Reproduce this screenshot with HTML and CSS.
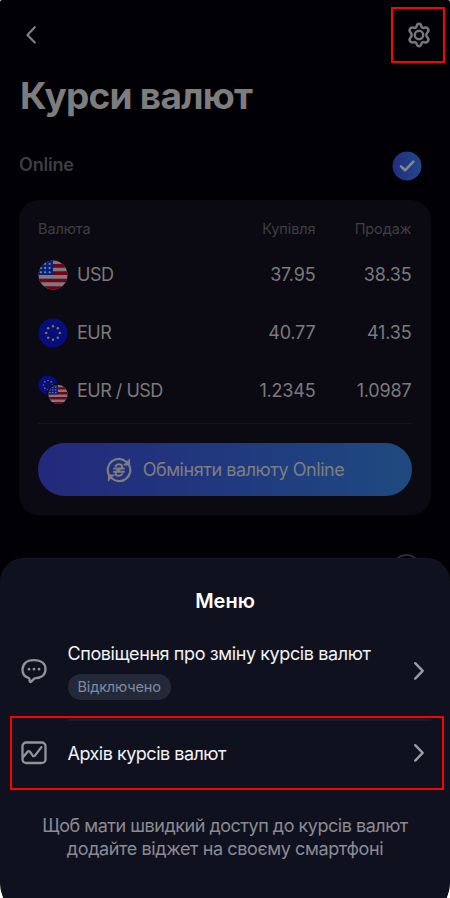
FILE: index.html
```html
<!DOCTYPE html>
<html lang="uk">
<head>
<meta charset="utf-8">
<title>Курси валют</title>
<link rel="stylesheet" href="styles.css">
</head>
<body>
<svg class="defs" width="0" height="0" aria-hidden="true">
  <defs>
    <clipPath id="round"><circle cx="15" cy="15" r="14.5"/></clipPath>
    <symbol id="flag-us" viewBox="0 0 30 30">
      <g clip-path="url(#round)">
        <rect width="30" height="30" fill="#7c7a7d"/>
        <path d="M0 5.8h30M0 13.2h30M0 20.5h30M0 28h30" stroke="#750018" stroke-width="3.7"/>
        <rect width="15" height="15" fill="#0a1f7c"/>
        <path d="M7 3.9h.3M11.5 3.9h.3M7 8h.3M11.5 8h.3M2.7 8h.3M7 12.2h.3M11.5 12.2h.3M2.7 12.2h.3" stroke="#858890" stroke-width="1.9"/>
      </g>
    </symbol>
    <symbol id="flag-eu" viewBox="0 0 30 30">
      <circle cx="15" cy="15" r="14.5" fill="#050e7c"/>
      <g fill="#82754a">
        <circle cx="15" cy="8.2" r="1.25"/><circle cx="19.8" cy="10.2" r="1.25"/>
        <circle cx="21.8" cy="15" r="1.25"/><circle cx="19.8" cy="19.8" r="1.25"/>
        <circle cx="15" cy="21.8" r="1.25"/><circle cx="10.2" cy="19.8" r="1.25"/>
        <circle cx="8.2" cy="15" r="1.25"/><circle cx="10.2" cy="10.2" r="1.25"/>
      </g>
    </symbol>
  </defs>
</svg>
<div class="phone">
  <header class="bar">
    <svg class="back" viewBox="0 0 12 20"><path d="M9.8 2.2 2.4 9.9l7.4 7.6"/></svg>
    <div class="highlight settings">
      <svg class="gear" viewBox="0 0 26 26">
        <path d="M10.6 4.2C11 2.4 11.7 1.7 13 1.7s2 .7 2.4 2.5c.3 1.4 1.3 2 2.7 1.6 1.8-.6 3-.4 3.9 1.1s.6 2.4-.7 3.7c-1.3 1.3-1.3 3.4 0 4.7s1.6 2.2.7 3.7-2.1 1.8-3.9 1.2c-1.4-.4-2.4.2-2.7 1.6-.4 1.8-1.1 2.5-2.4 2.5s-2-.7-2.4-2.5c-.3-1.4-1.3-2-2.7-1.6-1.8.6-3 .3-3.9-1.2s-.6-2.4.7-3.7 1.3-3.4 0-4.7S3.1 8.4 4 6.9s2.1-1.7 3.9-1.1c1.4.4 2.4-.2 2.7-1.6z"/>
        <circle cx="13" cy="13" r="4.2"/>
      </svg>
    </div>
  </header>
  <h1 class="title">Курси валют</h1>
  <div class="section">
    <span class="section-name">Online</span>
    <svg class="check" viewBox="0 0 30 30">
      <defs><linearGradient id="cg"><stop offset="0" stop-color="#232d80"/><stop offset="1" stop-color="#22478a"/></linearGradient></defs>
      <circle cx="15" cy="15" r="14.5" fill="url(#cg)" stroke="none"/>
      <path d="m9 15.400 4 3.900 8.300-8.600"/>
    </svg>
  </div>
  <section class="card">
    <div class="row head"><span class="h-name">Валюта</span><span>Купівля</span><span>Продаж</span></div>
    <div class="row">
      <span class="cur"><svg class="flag"><use href="#flag-us"/></svg><b class="code">USD</b></span><span>37.95</span><span>38.35</span>
    </div>
    <div class="row">
      <span class="cur"><svg class="flag"><use href="#flag-eu"/></svg><b class="code">EUR</b></span><span>40.77</span><span>41.35</span>
    </div>
    <div class="row">
      <span class="cur"><svg class="flag" viewBox="0 0 30 30"><use href="#flag-eu" width="20" height="20"/><circle cx="20" cy="19.5" r="11" fill="#0b0a12"/><use href="#flag-us" x="10" y="9.5" width="20" height="20"/></svg><b class="code">EUR / USD</b></span><span>1.2345</span><span>1.0987</span>
    </div>
    <hr class="rule">
    <button class="exchange">
      <svg class="swap" viewBox="0 0 26 26">
        <path d="M3 18A11 11 0 0 1 20.200 4.800M23 8A11 11 0 0 1 5.800 21.200"/>
        <path d="M23.600 2.400v5.600h-5.600zM2.400 23.600v-5.600h5.600z" fill="#7e7e80" stroke-width="1"/>
        <path class="sign" d="M9.600 9.100c.8-1.200 1.900-1.800 3.300-1.800 1.900 0 3.200.9 3.200 2.500 0 3.300-6.600 3-6.600 6.400 0 1.600 1.300 2.600 3.200 2.600 1.500 0 2.700-.6 3.600-1.800M8 11.500h10M8 14.700h10"/>
      </svg>
      <span>Обміняти валюту Online</span>
    </button>
  </section>
  <div class="next"><i class="radio"></i></div>
  <section class="sheet">
    <h2 class="sheet-title">Меню</h2>
    <div class="item notify">
      <svg class="icon" viewBox="0 0 26 26">
        <path d="M7.500 19.900C3.900 18.700 1.500 15.900 1.500 11.900 1.500 6 5.200 2.100 13 2.100S24.500 6 24.500 11.300s-3.800 8.600-9.800 8.800c-.9 0-1.400.4-2 1l-2.200 2.300c-1 1-1.900.7-1.900-.6v-1.300c0-.9-.3-1.300-1.100-1.600z"/>
        <path class="dots" d="M8 11.200h.01M13 11.200h.01M18 11.200h.01"/>
      </svg>
      <div class="text"><span class="label">Сповіщення про зміну курсів валют</span><span class="tag">Відключено</span></div>
      <svg class="next-arrow" viewBox="0 0 12 20"><path d="m2.200 2.200 7.500 7.700-7.500 7.700"/></svg>
    </div>
    <div class="archive">
      <hr class="divider">
      <div class="item">
        <svg class="icon" viewBox="0 0 26 26">
          <rect x="1.500" y="2.500" width="23" height="20.500" rx="3.800"/>
          <path d="m2 17.300 4.600-5.600c.8-.9 1.500-.9 2.300.1l2.700 3.600c.9 1.100 1.700 1 2.500 0L20.400 7.200"/>
        </svg>
        <span class="label short">Архів курсів валют</span>
        <svg class="next-arrow" viewBox="0 0 12 20"><path d="m2.200 2.200 7.500 7.700-7.500 7.700"/></svg>
      </div>
    </div>
    <p class="hint"><span class="line1">Щоб мати швидкий доступ до курсів валют</span><br><span class="line2">додайте віджет на своєму смартфоні</span></p>
  </section>
</div>
</body>
</html>
```
FILE: styles.css
```css
* { box-sizing: border-box; }
body { margin: 0; height: 898px; overflow: hidden; background: #fff; font-family: Inter, "Noto Sans", sans-serif; }
svg { display: block; fill: none; stroke-linecap: round; stroke-linejoin: round; flex: none; }
.defs { position: absolute; }
.phone { position: relative; height: 922px; padding: 7px 19px 0; overflow: hidden; background: #000005; border-radius: 2px 2px 40px 40px; }

.bar { display: flex; align-items: center; justify-content: space-between; height: 56px; margin-right: -14px; padding-left: 6px; }
.back { width: 12px; height: 20px; stroke: #7f7f7f; stroke-width: 2.2; }
.highlight { border: 2px solid #f00; }
.settings { display: flex; align-items: center; justify-content: center; width: 54px; height: 56px; }
.gear { width: 26px; height: 26px; margin-left: 1px; stroke: #77777a; stroke-width: 2.5; }

.title { margin: 9px 0 0 1px; height: 48px; line-height: 48px; font-size: 37px; font-weight: 700; color: #7d7d7d; white-space: nowrap; letter-spacing: -.75px; }
.section { display: flex; justify-content: space-between; align-items: center; height: 30px; margin-top: 31px; padding-right: 9px; }
.section-name { margin-bottom: 4px; font-size: 18px; font-weight: 600; color: #3e3e43; letter-spacing: -.2px; }
.check { width: 30px; height: 30px; stroke: #85858a; stroke-width: 2.6; }

.card { height: 315px; margin-top: 19px; padding: 14px 19px 0; background: #0b0a12; border-radius: 20px; }
.row { display: grid; grid-template-columns: 1fr 110px 96px; align-items: center; height: 57.7px; padding-right: .6px; font-size: 18px; letter-spacing: -.2px; color: #7a7a7d; text-align: right; }
.row.head { height: 29px; margin-bottom: 3px; font-size: 14.5px; letter-spacing: -.1px; color: #3e3e43; }
.h-name, .cur { text-align: left; }
.cur { display: flex; align-items: center; gap: 9px; white-space: nowrap; }
.flag { width: 30px; height: 30px; }
.code { font-weight: 400; letter-spacing: -.5px; }
.rule { height: 1px; margin: 4px 0 0; border: 0; background: #161519; }
.exchange { display: flex; align-items: center; justify-content: center; gap: 11px; width: 100%; height: 53px; margin-top: 19px; border: 0; border-radius: 27px; background: linear-gradient(90deg, #23297c, #203a7e 55%, #1f4a80); color: #7e7e80; font: 400 18px Inter, sans-serif; letter-spacing: -.45px; white-space: nowrap; }
.swap { width: 26px; height: 26px; stroke: #7e7e80; stroke-width: 2.2; }
.sign { stroke-width: 1.9; }
.next { display: flex; justify-content: flex-end; height: 29px; margin-top: 39px; padding-right: 10px; }
.radio { width: 29px; height: 29px; border: 2px solid #2c2c31; border-radius: 50%; }

.sheet { position: absolute; inset: 558px 0 0; padding-top: 28px; background: #10111f; border-radius: 24px 24px 40px 40px; border-top: 1px solid #171825; }
.sheet-title { margin: 0; height: 28px; line-height: 28px; font-size: 20px; font-weight: 600; text-align: center; color: #fff; }
.item { display: flex; align-items: center; }
.notify { height: 101px; padding: 11px 25px 0 21px; }
.icon { width: 26px; height: 26px; stroke: #93939a; stroke-width: 2.3; }
.dots { stroke-width: 2.8; }
.text { display: flex; flex-direction: column; align-items: flex-start; margin: 0 auto 0 20.5px; }
.label { font-size: 18px; line-height: 24px; letter-spacing: -.4px; color: #f3f3f5; white-space: nowrap; }
.tag { height: 26px; margin-top: 8px; padding: 0 10px; border-radius: 13px; background: #242939; color: #7f8ba3; font-size: 14.5px; line-height: 26px; letter-spacing: -.15px; }
.next-arrow { width: 12px; height: 20px; stroke: #9b9ba2; stroke-width: 2.4; }
.archive { height: 74px; margin: 0 6px 0 10px; border: 2px solid #f00; }
.divider { height: 2px; margin: 1px 11px 0 56px; border: 0; background: #1b1c2a; }
.archive .item { height: 64px; padding: 0 17px 0 9px; }
.short { margin: 1px auto 0 20.5px; padding-top: 1px; letter-spacing: -.5px; }
.hint { margin: 24px 0 0; font-size: 18px; line-height: 23px; text-align: center; color: #8b8b92; white-space: nowrap; }
.line1 { letter-spacing: -.48px; }
.line2 { letter-spacing: -.39px; }
```
